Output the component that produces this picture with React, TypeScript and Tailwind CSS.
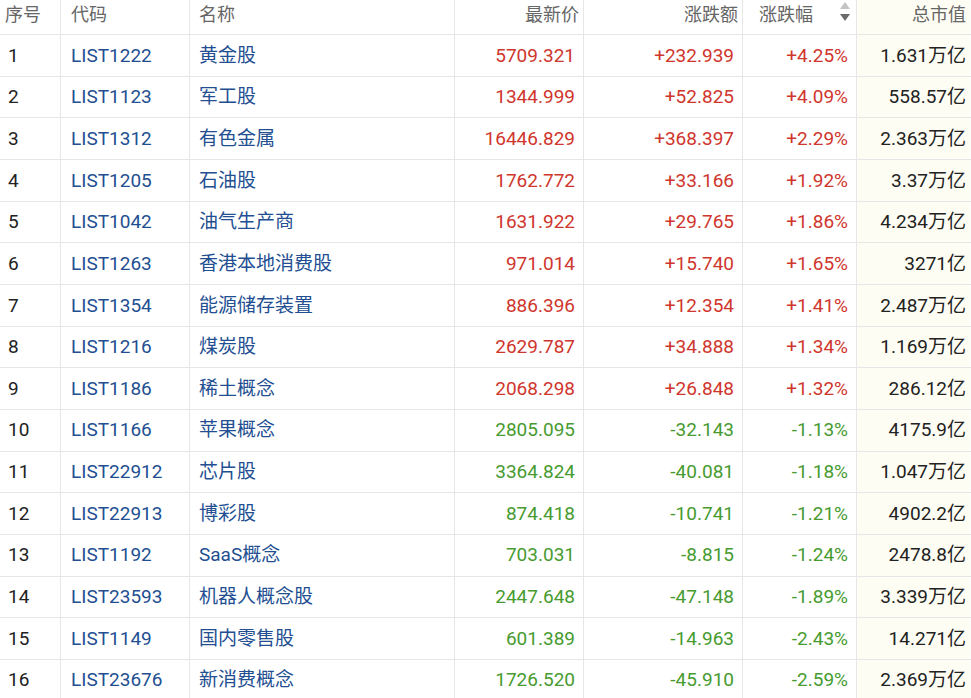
import { ReactNode } from 'react';

type Row = {
  code: string;
  name: string;
  price: string;
  change: string;
  pct: string;
  cap: string;
};

const rows: Row[] = [
  { code: 'LIST1222', name: '黄金股', price: '5709.321', change: '+232.939', pct: '+4.25%', cap: '1.631万亿' },
  { code: 'LIST1123', name: '军工股', price: '1344.999', change: '+52.825', pct: '+4.09%', cap: '558.57亿' },
  { code: 'LIST1312', name: '有色金属', price: '16446.829', change: '+368.397', pct: '+2.29%', cap: '2.363万亿' },
  { code: 'LIST1205', name: '石油股', price: '1762.772', change: '+33.166', pct: '+1.92%', cap: '3.37万亿' },
  { code: 'LIST1042', name: '油气生产商', price: '1631.922', change: '+29.765', pct: '+1.86%', cap: '4.234万亿' },
  { code: 'LIST1263', name: '香港本地消费股', price: '971.014', change: '+15.740', pct: '+1.65%', cap: '3271亿' },
  { code: 'LIST1354', name: '能源储存装置', price: '886.396', change: '+12.354', pct: '+1.41%', cap: '2.487万亿' },
  { code: 'LIST1216', name: '煤炭股', price: '2629.787', change: '+34.888', pct: '+1.34%', cap: '1.169万亿' },
  { code: 'LIST1186', name: '稀土概念', price: '2068.298', change: '+26.848', pct: '+1.32%', cap: '286.12亿' },
  { code: 'LIST1166', name: '苹果概念', price: '2805.095', change: '-32.143', pct: '-1.13%', cap: '4175.9亿' },
  { code: 'LIST22912', name: '芯片股', price: '3364.824', change: '-40.081', pct: '-1.18%', cap: '1.047万亿' },
  { code: 'LIST22913', name: '博彩股', price: '874.418', change: '-10.741', pct: '-1.21%', cap: '4902.2亿' },
  { code: 'LIST1192', name: 'SaaS概念', price: '703.031', change: '-8.815', pct: '-1.24%', cap: '2478.8亿' },
  { code: 'LIST23593', name: '机器人概念股', price: '2447.648', change: '-47.148', pct: '-1.89%', cap: '3.339万亿' },
  { code: 'LIST1149', name: '国内零售股', price: '601.389', change: '-14.963', pct: '-2.43%', cap: '14.271亿' },
  { code: 'LIST23676', name: '新消费概念', price: '1726.520', change: '-45.910', pct: '-2.59%', cap: '2.369万亿' },
];

const cols = 'grid grid-cols-[61px_129px_265px_129px_159px_114px_113px]';

function Cell({ children, className = '' }: { children?: ReactNode; className?: string }) {
  return <div className={`flex items-center border-r border-[#e6e6e6] ${className}`}>{children}</div>;
}

function SortIcon() {
  return (
    <svg width="12" height="22" viewBox="0 0 12 22" className="mb-1">
      <path d="M6 1 L11 8 L1 8 Z" fill="#c4c4c4" />
      <path d="M1 13 L11 13 L6 20 Z" fill="#6b6b6b" />
    </svg>
  );
}

export default function App() {
  return (
    <div
      className="w-[971px] h-[698px] overflow-hidden bg-white text-[19px]"
      style={{ fontFamily: 'Roboto, "Noto Sans CJK SC", sans-serif' }}
    >
      {/* header */}
      <div className={`${cols} h-[35px] border-b border-[#e6e6e6] text-[18px] text-[#666]`}>
        <Cell className="pl-[5px] pb-[6px]">序号</Cell>
        <Cell className="pl-[10px] pb-[6px]">代码</Cell>
        <Cell className="pl-[9px] pb-[6px]">名称</Cell>
        <Cell className="justify-end pr-[4px] pb-[6px]">最新价</Cell>
        <Cell className="justify-end pr-[4px] pb-[6px]">涨跌额</Cell>
        <Cell className="justify-between pl-[16px] pr-[5px] pb-[6px]">
          <span>涨跌幅</span>
          <SortIcon />
        </Cell>
        <div className="flex items-center justify-end pr-[4px] pb-[6px] bg-[#fefdf3]">总市值</div>
      </div>

      {rows.map((r, i) => {
        const up = r.change.startsWith('+');
        const color = up ? 'text-[#cf362d]' : 'text-[#479b30]';
        return (
          <div key={r.code} className={`${cols} h-[41.67px] border-b border-[#e6e6e6]`}>
            <Cell className="pl-[8px] pt-[1px] text-[#222]">{i + 1}</Cell>
            <Cell className="pl-[10px] pt-[1px] text-[#234f92]">{r.code}</Cell>
            <Cell className="pl-[9px] pt-[1px] text-[#234f92]">{r.name}</Cell>
            <Cell className={`justify-end pt-[1px] pr-[8px] ${color}`}>{r.price}</Cell>
            <Cell className={`justify-end pt-[1px] pr-[8px] ${color}`}>{r.change}</Cell>
            <Cell className={`justify-end pt-[1px] pr-[8px] ${color}`}>{r.pct}</Cell>
            <div className="flex items-center justify-end pt-[1px] pr-[4px] bg-[#fefdf3] text-[#222]">{r.cap}</div>
          </div>
        );
      })}
    </div>
  );
}
